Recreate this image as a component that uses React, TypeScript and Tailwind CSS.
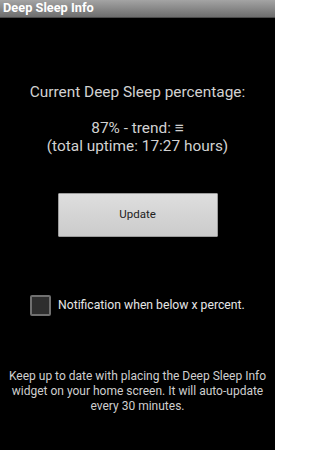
export default function App() {
  return (
    <div
      className="flex h-[450px] w-[275px] flex-col bg-black"
      style={{ fontFamily: "Roboto, 'Noto Sans', sans-serif" }}
    >
      {/* Title bar */}
      <div className="flex h-[18px] items-center border-b border-[#4a4a4a] bg-gradient-to-b from-[#a4a4a4] to-[#6e6e6e] px-[3px]">
        <span className="text-[12.8px] font-bold leading-none text-white">Deep Sleep Info</span>
      </div>

      {/* Status */}
      <div className="mt-[64px] text-center text-[#d2d2d2]">
        <p className="text-[15.4px] leading-[20px]">Current Deep Sleep percentage:</p>
        <p className="mt-[17px] text-[15.4px] leading-[18px]">87% - trend: ≡</p>
        <p className="text-[15.4px] leading-[18px]">(total uptime: 17:27 hours)</p>
      </div>

      {/* Update button */}
      <div className="mt-[38px] flex justify-center">
        <button className="h-[44px] w-[160px] rounded-[1px] border border-[#9c9c9c] bg-gradient-to-b from-[#dedede] to-[#cbcbcb] text-[11.5px] text-[#222]">
          Update
        </button>
      </div>

      {/* Notification checkbox */}
      <div className="mt-[58px] flex items-center pl-[30px]">
        <div className="h-[21px] w-[21px] rounded-[2px] border-2 border-[#707070] bg-[#2e2e2e]" />
        <span className="ml-[7px] text-[12.2px] text-[#e6e6e6]">Notification when below x percent.</span>
      </div>

      {/* Widget hint */}
      <p className="mt-[53px] px-[6px] text-center text-[12px] leading-[15px] text-[#cfcfcf]">
        Keep up to date with placing the Deep Sleep Info widget on your home screen. It will auto-update every 30 minutes.
      </p>
    </div>
  )
}
